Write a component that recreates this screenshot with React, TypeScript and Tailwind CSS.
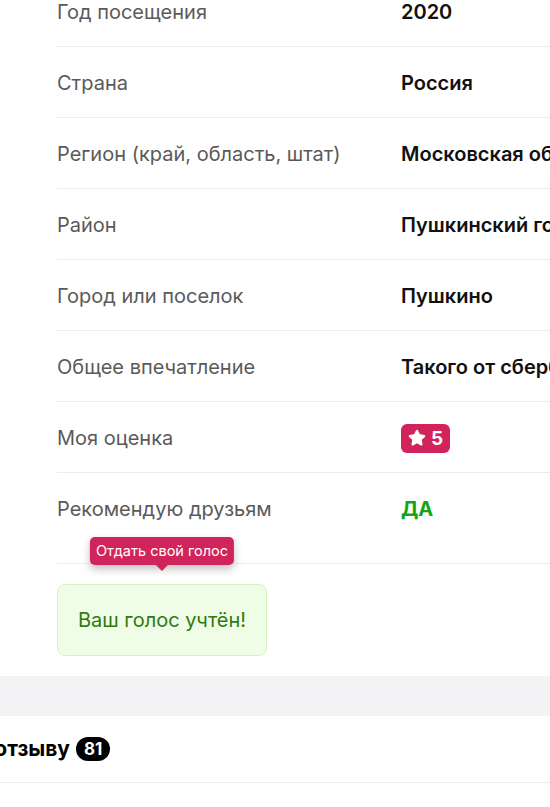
import { Star } from 'lucide-react';

type Row = { label: string; value: React.ReactNode };

const rows: Row[] = [
  { label: 'Год посещения', value: '2020' },
  { label: 'Страна', value: 'Россия' },
  { label: 'Регион (край, область, штат)', value: 'Московская область' },
  { label: 'Район', value: 'Пушкинский городской округ' },
  { label: 'Город или поселок', value: 'Пушкино' },
  { label: 'Общее впечатление', value: 'Такого от сбербанка не ожидала' },
  {
    label: 'Моя оценка',
    value: (
      <span className="inline-flex h-[29px] items-center gap-[5px] rounded-md bg-[#d1245a] px-[7px] text-white">
        <Star className="h-[18px] w-[18px]" fill="currentColor" strokeWidth={2} strokeLinejoin="round" />
        <span className="text-[19px] font-bold leading-none">5</span>
      </span>
    ),
  },
  { label: 'Рекомендую друзьям', value: <span className="font-bold text-[#16a316]">ДА</span> },
];

export default function App() {
  return (
    <div className="min-h-[807px] overflow-hidden bg-white font-['Inter',sans-serif] text-[20px]">
      {/* Review details */}
      <div className="-mt-[24px] pl-[57px]">
        {rows.map((row, i) => (
          <div
            key={row.label}
            className={
              'flex items-center border-b border-[#ececec] pt-[22px] ' +
              (i === rows.length - 1 ? 'pb-[40px]' : 'pb-[20px]')
            }
          >
            <div className="w-[344px] shrink-0 leading-[28px] text-[#5a5a5a]">{row.label}</div>
            <div className="flex h-[28px] items-center whitespace-nowrap font-semibold text-[#111]">
              {row.value}
            </div>
          </div>
        ))}

        {/* Vote block */}
        <div className="relative mt-[20px] w-[210px]">
          <div className="absolute -top-[47px] left-1/2 -translate-x-1/2 whitespace-nowrap rounded-[5px] bg-[#d1245a] px-[6px] py-[4px] text-[14.5px] leading-[20px] text-white shadow-[0_4px_8px_rgba(0,0,0,0.25)]">
            Отдать свой голос
            <span className="absolute left-1/2 top-full h-0 w-0 -translate-x-1/2 border-x-[6px] border-t-[6px] border-x-transparent border-t-[#d1245a]" />
          </div>
          <div className="flex h-[72px] items-center justify-center rounded-lg border border-[#d6f2c4] bg-[#f0fde6] text-[20px] text-[#2e7a10]">
            Ваш голос учтён!
          </div>
        </div>
      </div>

      <div className="mt-[20px] h-[40px] bg-[#f3f3f5]" />

      {/* Comments header */}
      <div className="flex h-[67px] items-center border-b border-[#ececec]">
        <div className="flex w-[70px] justify-end overflow-hidden whitespace-nowrap">
          <span className="text-[21px] font-bold text-black">Комментарии к отзыву</span>
        </div>
        <span className="ml-[6px] rounded-full bg-black px-[8px] text-[17px] font-bold leading-[24px] text-white">81</span>
      </div>
    </div>
  );
}
